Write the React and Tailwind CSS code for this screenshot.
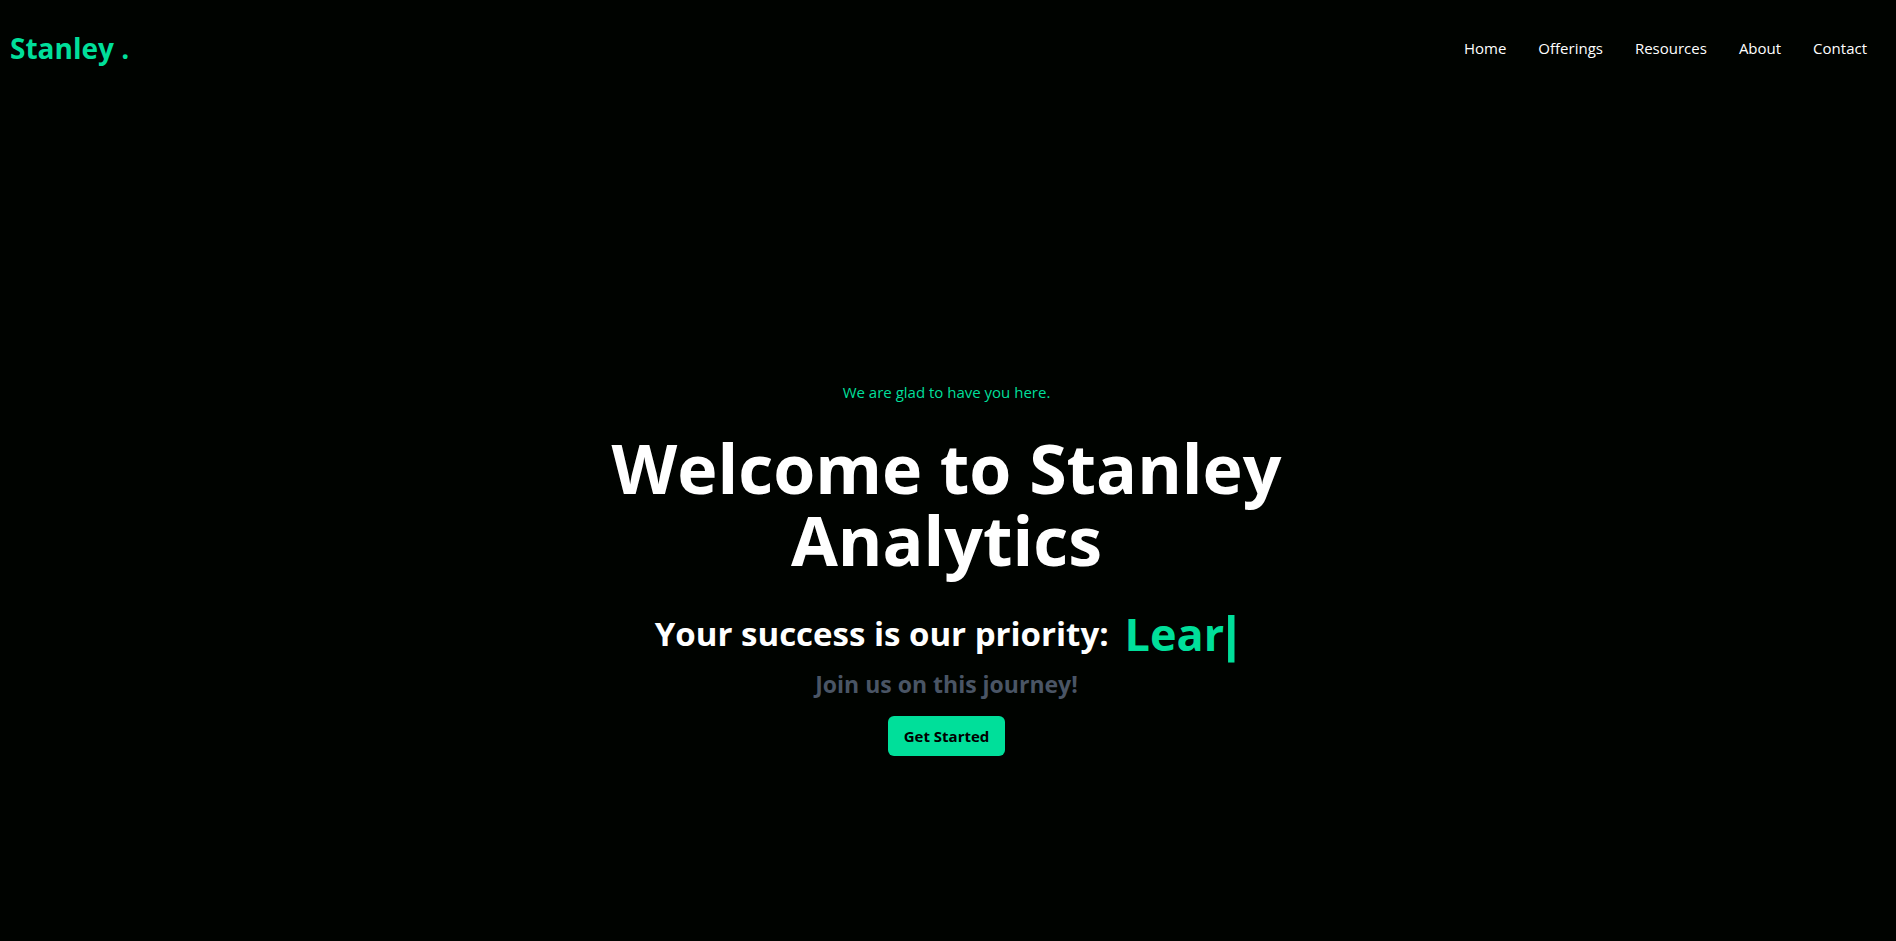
const links = ["Home", "Offerings", "Resources", "About", "Contact"];

export default function App() {
  return (
    <div className="min-h-screen bg-[#000300] pr-[3px] font-['Open_Sans','Noto_Sans',sans-serif] text-white">
      <header className="flex h-24 items-center justify-between px-2.5">
        <a href="#home" className="text-[28px] font-bold leading-9 text-[#00df9a]">Stanley .</a>
        <nav className="flex">
          {links.map((name) => (
            <a key={name} href={"#" + name.toLowerCase()} className="p-4 text-[15px] leading-6">{name}</a>
          ))}
        </nav>
      </header>
      <main className="mx-auto flex max-w-[800px] flex-col items-center pt-[284px] text-center">
        <p className="text-[15px] leading-6 text-[#00df9a]">We are glad to have you here.</p>
        <h1 className="pt-7 pb-6 text-[68px] font-bold leading-[72px]">Welcome to Stanley Analytics</h1>
        <div className="flex items-center py-2.5">
          <p className="text-[33px] font-bold leading-10">Your success is our priority:</p>
          <p className="flex items-center pl-4 text-[45px] font-bold leading-[48px] text-[#00df9a]">
            Lear
            <span className="font-['Liberation_Sans',sans-serif] text-[50px] leading-[48px]">|</span>
          </p>
        </div>
        <p className="text-[23px] font-bold leading-8 text-gray-600">Join us on this journey!</p>
        <button type="button" className="mt-4 rounded-md bg-[#00df9a] px-4 py-2 text-[15px] font-bold leading-6 text-black">Get Started</button>
      </main>
    </div>
  );
}
